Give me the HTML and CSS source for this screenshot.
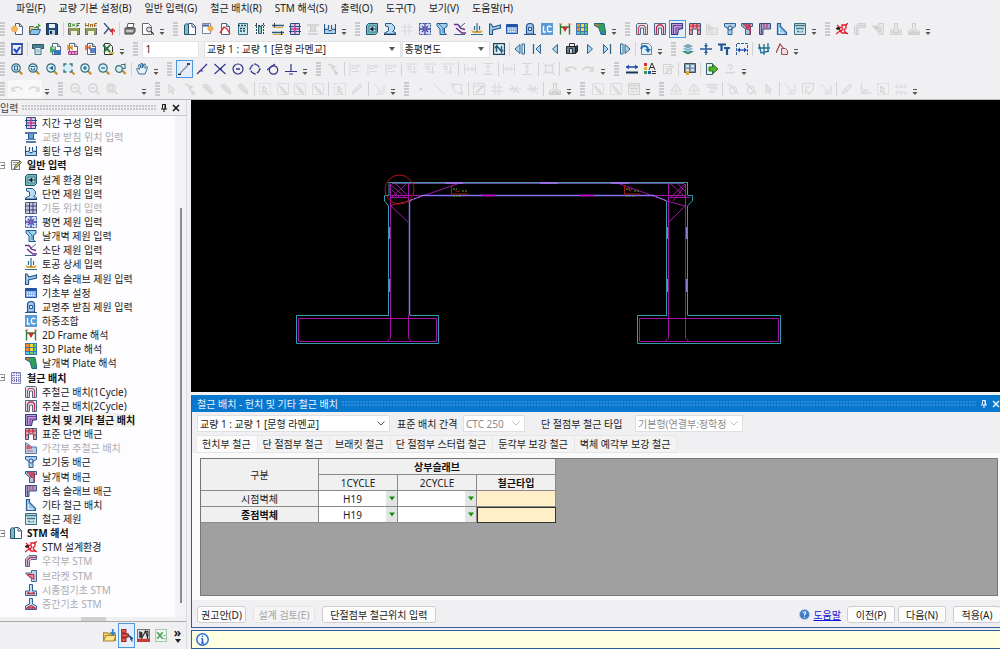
FILE: index.html
```html
<!DOCTYPE html>
<html lang="ko">
<head>
<meta charset="utf-8">
<title>철근 배치</title>
<link rel="stylesheet" href="styles.css">
</head>
<body>
<svg class="defs" aria-hidden="true">
<defs>
<g id="mag"><path d="M8 8l3.3 3.3" stroke="#c98a2c" stroke-width="2.2"/><circle cx="5" cy="5" r="4.2" fill="#d5f1f5" stroke="#37717e" stroke-width="1.2"/></g>
<g id="page"><path d="M2.5 .5h5l3 3v8h-8z" fill="#fff" stroke="#4b6480"/><path d="M7.5 .5v3h3" fill="#cfe0ee" stroke="#4b6480"/></g>
<g id="disk"><path d="M.5 3.5h11v8h-11z" fill="#8f9c52" stroke="#666"/><path d="M3 8h6v4H3z" fill="#eee"/><path d="M0 0h12v5H0z" fill="#e9eef0"/></g>
</defs>
<symbol id="new" viewBox="0 0 12 12"><path d="M4.5 .5h4l3 3v8h-7z" fill="#fff" stroke="#4b6480"/><path d="M8.5 .5v3h3" fill="none" stroke="#4b6480"/><circle cx="3.5" cy="6" r="3" fill="#f4b95c" stroke="#dc9640" stroke-dasharray="1 1"/></symbol>
<symbol id="open" viewBox="0 0 12 12"><path d="M.5 3.5h4l1 1h4v6h-9z" fill="#e6cf7c" stroke="#3d6a8b"/><path d="M2.5 6.5h9l-2 5h-9z" fill="#8ec3e6" stroke="#2b5e8c"/><path d="M7 5V3h2V0l3 3-3 1" fill="#3fa73a"/></symbol>
<symbol id="save" viewBox="0 0 12 12"><path d="M.5 .5h10l1 1v10H.5z" fill="#1f4d78" stroke="#14304e"/><path d="M3 1h6v4H3z" fill="#e6eef5"/><path d="M3 7h6v5H3z" fill="#bcd"/><path d="M4 8h2v3H4z" fill="#14304e"/></symbol>
<symbol id="dxf" viewBox="0 0 12 12"><use href="#disk"/><path d="M.5 .5v3h2v-3zM4 .5l3 3m0-3l-3 3M9 4V.5h3M9 2.5h2" fill="none" stroke="#3f7a24"/></symbol>
<symbol id="wmf" viewBox="0 0 12 12"><use href="#disk"/><path d="M.5 0v3.5L2 2l1.5 1.5V0M5.5 4V1l1 1 1-1v3M9.5 4V.5H12M9.5 2.5h2" fill="none" stroke="#a36a26"/></symbol>
<symbol id="pick" viewBox="0 0 12 12"><path d="M1 0l8 9M1 11l5-6" stroke="#31507a" stroke-width="1.3"/><path d="M9.5 12V7M7 8.5L9.5 6 12 8.5" fill="none" stroke="#d03434" stroke-width="1.3"/></symbol>
<symbol id="print" viewBox="0 0 12 12"><path d="M4 .5h6l-1 4H3z" fill="#fff" stroke="#555"/><path d="M1 5h10v4l-2 2H1z" fill="#888" stroke="#444"/><path d="M2 8h7" stroke="#fff"/></symbol>
<symbol id="preview" viewBox="0 0 12 12"><path d="M.5 .5h6l3 3v8h-9z" fill="#fff" stroke="#666"/><circle cx="7" cy="6.5" r="2.5" fill="#d5dfe4" stroke="#555"/><path d="M9 8.5l3 3" stroke="#444" stroke-width="1.5"/></symbol>
<symbol id="colpage" viewBox="0 0 12 12"><path d="M4.5 .5h4l3 3v8h-7z" fill="#fff" stroke="#35557c"/><path d="M.5 2l2-1.5L4.5 2v9.5h-4z" fill="#7fb9c8" stroke="#24536c"/><path d="M8 1v3h3" fill="none" stroke="#35557c"/></symbol>
<symbol id="sunpage" viewBox="0 0 12 12"><path d="M.5 .5h8v10h-8z" fill="#f7f9fc" stroke="#7a85a0"/><path d="M1 2.5h6" stroke="#3e5f9c" stroke-width="2"/><circle cx="8.5" cy="5.5" r="2.6" fill="#f3b34f" stroke="#d88a2a" stroke-dasharray="1 1"/></symbol>
<symbol id="curvepage" viewBox="0 0 12 12"><use href="#page"/><path d="M1 10l4-6 3 2 3 5" fill="none" stroke="#d4303c" stroke-width="1.4"/></symbol>
<symbol id="calc" viewBox="0 0 12 12"><path d="M1.5 .5h9v11h-9z" fill="#c9e8ec" stroke="#2e7482"/><path d="M1 2.5h5M7 2.5h3M3 5.5h6M3 8h6" stroke="#1b4560" stroke-width="1.5" stroke-dasharray="2 1"/></symbol>
<symbol id="pier" viewBox="0 0 12 12"><path d="M1 2.5h10M2.5 0v12M9.5 0v12" stroke="#345" stroke-dasharray="2 1"/><path d="M4.5 3.5h3v7h-3z" fill="#8fd09a" stroke="#245d8c"/></symbol>
<symbol id="spans" viewBox="0 0 12 12"><path d="M0 2.5h12M0 9.5h12" stroke="#2b5878" stroke-width="1.5"/><path d="M1 4.5h10M1 11.5h10" stroke="#d8a63e"/><path d="M2.5 0v4M9.5 8v4" stroke="#333"/></symbol>
<symbol id="span" viewBox="0 0 12 12"><path d="M1.5 .5h9v11h-9z" fill="#d8cfe6" stroke="#274f86"/><path d="M0 3.5h12M0 8.5h12" stroke="#274f86"/><path d="M2 6h8M6 1v10" stroke="#c03a9a" stroke-width="1.4"/></symbol>
<symbol id="bearing" viewBox="0 0 12 12"><path d="M0 2h12M1 11h10" stroke="#1f4f8c" stroke-width="1.4"/><path d="M3.5 3v5h5V3" fill="#5da7dd" stroke="#1f4f8c"/><path d="M1 8.5h10" stroke="#5b83b8"/></symbol>
<symbol id="cross" viewBox="0 0 12 12"><path d="M.5 1v9.5h11V1M4.5 2v4M7.5 2v4" fill="none" stroke="#27588c" stroke-width="1.2"/><path d="M1 7h10v3H1z" fill="#a9d4ea"/><path d="M0 7l3-1 3 2 3-2 3 1" fill="none" stroke="#1b3f74"/></symbol>
<symbol id="memo" viewBox="0 0 12 12"><path d="M1.5 1.5h8v9h-8z" fill="#f2f4f6" stroke="#777"/><path d="M3 3.5h5M3 5.5h3" stroke="#999"/><path d="M4 10l1-3 5-5 1.5 1.5-5 5z" fill="#b9b95e" stroke="#555" stroke-width=".8"/></symbol>
<symbol id="env" viewBox="0 0 12 12"><path d="M.5 2.5l2-2h9v9l-2 2h-9z" fill="#75bcc0" stroke="#22526c"/><path d="M3 3h7v6H3z" fill="#b9e5dc" stroke="#3f7c8c"/><path d="M4 6l3-2v4zM7 6h3" fill="#10243c" stroke="#10243c" stroke-width=".8"/></symbol>
<symbol id="section" viewBox="0 0 12 12"><path d="M1.5 .5h6l3 3v3l-2 2 3 1v1.500h-11v-1l4-2V4l-3-1z" fill="#b9ddf1" stroke="#27588c"/><path d="M0 11.5h12" stroke="#16365f"/></symbol>
<symbol id="pillar" viewBox="0 0 12 12"><path d="M.5 .5h11v11H.5z" fill="#c5cbdc" stroke="#55607c"/><path d="M4.5 0v12M8 0v12M0 4h12M0 8h12" stroke="#3d3d78"/></symbol>
<symbol id="plan" viewBox="0 0 12 12"><path d="M.5 .5h11v11H.5z" fill="#d6dcf4" stroke="#2a4d94" stroke-dasharray="2 1"/><path d="M3 3l6 6M9 3L3 9M6 0v12M0 6h12" stroke="#3e4aa6" stroke-width="1.3"/><circle cx="6" cy="6" r="1.8" fill="#8f5db8"/></symbol>
<symbol id="wing" viewBox="0 0 12 12"><path d="M1 .5h10v3L8.500 5v5l2 1.5H4V6L1 3z" fill="#9cd3ea" stroke="#27588c"/><path d="M3 1l4 4v5" fill="none" stroke="#2b7fae"/></symbol>
<symbol id="berm" viewBox="0 0 12 12"><path d="M0 1.5h4l3 4 4 1M2 5l6 5h4" fill="none" stroke="#6d2f8c" stroke-width="1.4"/><path d="M11 0L5 5M0 11.5h11" stroke="#44608a"/></symbol>
<symbol id="earth" viewBox="0 0 12 12"><path d="M0 7l3 1h6l3-1-2 3H2z" fill="#e0a32c"/><path d="M6 0v9M3.500 3v4M8.500 3v4" stroke="#2b6f8c" stroke-width="1.2"/><path d="M0 11.5h12" stroke="#2b6f8c"/></symbol>
<symbol id="slab" viewBox="0 0 12 12"><path d="M.5 1v10.5h3V7l8-2V2L4 4 2 1z" fill="#a4d2ee" stroke="#24568c" stroke-width="1.2"/></symbol>
<symbol id="found" viewBox="0 0 12 12"><path d="M.5 1.5h11v9H.5z" fill="#8fb6ea" stroke="#2553a4"/><path d="M1 3h10" stroke="#2553a4" stroke-width="2"/><path d="M2 6h8M2 8.5h8" stroke="#fff" stroke-dasharray="1 1"/></symbol>
<symbol id="plate" viewBox="0 0 12 12"><path d="M2.5 11V4a3.500 3.500 0 0 1 7 0v7z" fill="#9fc8ee" stroke="#27558f" stroke-width="1.2"/><path d="M4.5 4.5h3v3h-3z" fill="#e2eefa" stroke="#27558f"/><path d="M0 11.5h12" stroke="#27558f"/></symbol>
<symbol id="lc" viewBox="0 0 12 12"><path d="M0 0h12v12H0z" fill="#5a9bd6"/><path d="M2.5 3v6H5M10.5 4C7 2 6 4 6.500 7c.5 2.500 3 2 4 1" fill="none" stroke="#fff" stroke-width="1.4"/></symbol>
<symbol id="frame2d" viewBox="0 0 12 12"><path d="M1.5 1v10.5M10.5 1v10.5M1 4h10" fill="none" stroke="#2c7c3a" stroke-width="1.4"/><path d="M3 4h6L6 9z" fill="#d02c2c"/><path d="M0 1h3M9 1h3" stroke="#d8862c"/></symbol>
<symbol id="plate3d" viewBox="0 0 12 12"><path d="M0 0h12v12H0z" fill="#3b78b4"/><path d="M1 1h3v3H1zM1 5h3v3H1z" fill="#f0862e"/><path d="M5 1h3v3H5zM5 5h3v3H5z" fill="#f0dc3a"/><path d="M9 1h2v3H9zM9 5h2v3H9zM5 9h3v2H5z" fill="#6bd04b"/><path d="M1 9h3v2H1zM9 9h2v2H9z" fill="#59c5e6"/></symbol>
<symbol id="wingplate" viewBox="0 0 12 12"><path d="M0 .5h10l2 11H7L5 5 0 2z" fill="#2ea05a" stroke="#1f6a78"/><path d="M0 1h4l2 3" fill="#e4703a"/><path d="M8 7l3 4H8z" fill="#3b78c8"/></symbol>
<symbol id="rebar" viewBox="0 0 12 12"><path d="M1.5 .5h9v11h-9z" fill="#f2f2fb" stroke="#7b87b0"/><path d="M2 3.5h8M2 6h8M2 8.5h8M4 1v10M6.5 1v10M9 1v10" stroke="#6d62ae" stroke-dasharray="1 1"/></symbol>
<symbol id="main1" viewBox="0 0 12 12"><path d="M.5 11.5V1.500l1-1h9l1 1v10h-4V5h-3v6.5z" fill="#dfe9f4" stroke="#4f6888"/><path d="M2.5 11V4.500l1.500-2h4l1.500 2V11" fill="none" stroke="#cc4356" stroke-width="1.2"/></symbol>
<symbol id="main2" viewBox="0 0 12 12"><path d="M.5 11.5V.5h11v11h-4V5h-3v6.5z" fill="#dfe9f4" stroke="#4f6888"/><path d="M2.5 11V4l2-2h3l2 2v7" fill="none" stroke="#c02c48" stroke-width="1.3"/></symbol>
<symbol id="haunch" viewBox="0 0 12 12"><path d="M.5 .5h11v5l-4 1-1 5h-6z" fill="#b8a8e0" stroke="#37407c" stroke-width="1.2"/><path d="M2.5 11V2.5H11M5 11V5h6" fill="none" stroke="#8a2f94" stroke-width="1.1"/></symbol>
<symbol id="std" viewBox="0 0 12 12"><path d="M.5 .5h11v11h-3V6h-5v5.5h-3z" fill="#ef9aa2" stroke="#3e5378"/><path d="M1 3h10M4 1v4M8 1v4M1 7h2M9 7h2" stroke="#b8283c" stroke-width="1.2"/></symbol>
<symbol id="corner" viewBox="0 0 12 12"><path d="M.5 .5v11h11V5H7z" fill="#b9d4ea" stroke="#5577a0"/><path d="M2 3l5 3-5 1zM2 9h6" fill="#d65a68" stroke="#d65a68"/></symbol>
<symbol id="post" viewBox="0 0 12 12"><path d="M.5 .5h11v3L8 5.5v6H4v-6L.5 3.5z" fill="#a9d0ea" stroke="#31609a"/><circle cx="6" cy="5" r="2" fill="#e6f2fa" stroke="#1f4c8c"/></symbol>
<symbol id="wingbar" viewBox="0 0 12 12"><path d="M.5 .5h11v3h-2v8h-5V6L.5 3z" fill="#a7c8e2" stroke="#3a5c88"/><path d="M2 2h7v2H5l1 2h3v5" fill="none" stroke="#c62846" stroke-width="1.4"/></symbol>
<symbol id="slabbar" viewBox="0 0 12 12"><path d="M.5 .5h11V6H4v5.5H.5z" fill="#a7a2d0" stroke="#3d4a78"/><path d="M2.5 1v10M5 1v4M8 1v4" stroke="#b0305c"/></symbol>
<symbol id="etcbar" viewBox="0 0 12 12"><path d="M1.5 .5h3v3l6 6v2h-9z" fill="#8fc6ee" stroke="#2e5f98" stroke-width="1.2"/><path d="M3.5 5v5H8" fill="none" stroke="#e9f5fd"/></symbol>
<symbol id="spec" viewBox="0 0 12 12"><path d="M.5 .5h11v11H.5z" fill="#cfe5ea" stroke="#3d6c80"/><path d="M1 2.5h10M2 5.5h8M3 8.5h6" stroke="#3d7c90" stroke-width="1.5"/><path d="M5 8h3" stroke="#fff"/></symbol>
<symbol id="stm" viewBox="0 0 12 12"><path d="M3 4.500h3V2h4v3L8 7l2 3H6L4 8z" fill="none" stroke="#e0202c" stroke-width="1.300"/><path d="M1 2l3 3M9 3l3-3M0 11l5-4M9 9l3 2M7 5l-2 4" stroke="#e0202c" stroke-width="1.300"/><path d="M0 5.500h4M2 4v3" stroke="#222" stroke-width="1.500"/></symbol>
<symbol id="ugak" viewBox="0 0 12 12"><path d="M.5 11.5V4l3.5-3.5h7.5v4H6L4.5 6v5.5z" fill="#cfdcf0" stroke="#4b6796"/><path d="M2.5 11V5l2.5-2.5h6" fill="none" stroke="#d03448" stroke-width="1.4"/></symbol>
<symbol id="bracket" viewBox="0 0 12 12"><path d="M.5 3h6V.5h5v11h-5V9z" fill="#bcd4ea" stroke="#4b6796"/><path d="M2 4.5h7v5L2 4.5" fill="#ea8a94" stroke="#c82c40"/></symbol>
<symbol id="foot1" viewBox="0 0 12 12"><path d="M4.5 .5h3V7h4v4.5H.5V7h4z" fill="#bfe0f4" stroke="#2f5f96"/><path d="M2 9.5h8M3 8l2 2M9 8l-2 2" stroke="#cc2c3c" stroke-width="1.4"/></symbol>
<symbol id="foot2" viewBox="0 0 12 12"><path d="M4.5 .5h3V6l4 2v3.500H.5V8l4-2z" fill="#bfe0f4" stroke="#2f5f96"/><path d="M2 10l4-2.500L10 10z" fill="none" stroke="#cc2c3c" stroke-width="1.3"/></symbol>
<symbol id="check" viewBox="0 0 12 12"><path d="M1 .5h10v11H1z" fill="#eaf0fb" stroke="#1f3568" stroke-width="1.4"/><path d="M0 1h12" stroke="#2753a8" stroke-width="2"/><path d="M3 6l2.500 3L9 4" fill="none" stroke="#1f48d0" stroke-width="2"/></symbol>
<symbol id="printer" viewBox="0 0 12 12"><path d="M.5 1.5h11v4H.5z" fill="#4a8694" stroke="#30535e"/><path d="M3 4.5h6v7H3z" fill="#d9eef5" stroke="#48707c"/><path d="M4 7h4M4 9h4" stroke="#7fb0c0"/></symbol>
<symbol id="docexp" viewBox="0 0 12 12"><use href="#page"/><path d="M0 3.5h6v6H0z" fill="#48a85c"/><path d="M4 7h7v4H4z" fill="#3f73c0"/><path d="M2 5h3" stroke="#fff"/></symbol>
<symbol id="docxls" viewBox="0 0 12 12"><use href="#page"/><path d="M1 2v4l2-2 2 2V2" fill="none" stroke="#d88a2c" stroke-width="1.5"/><path d="M1 8h10v3.500H1z" fill="#c03490"/><path d="M2 10h8" stroke="#fff" stroke-dasharray="2 1"/></symbol>
<symbol id="docw" viewBox="0 0 12 12"><use href="#page"/><path d="M1 2v4l2-2 2 2V2" fill="none" stroke="#d8622c" stroke-width="1.5"/><path d="M5 5h5v5H5z" fill="#597ec4"/></symbol>
<symbol id="docx" viewBox="0 0 12 12"><path d="M2.500 .5h5l3 3v8h-8z" fill="#eef2ea" stroke="#333"/><path d="M1 2l7 7M8 2L2 9" stroke="#23744a" stroke-width="1.800"/><path d="M7 10h5" stroke="#d8b52c" stroke-width="2"/></symbol>
<symbol id="swap" viewBox="0 0 12 12"><path d="M.5 .5h11v11H.5z" fill="#e2f2f6" stroke="#1f4058" stroke-width="1.3"/><path d="M3.5 9V3L2 5M8.5 3v6L10 7M4 3l4 5" fill="none" stroke="#22587c" stroke-width="1.5"/></symbol>
<symbol id="first" viewBox="0 0 12 12"><path d="M6 1.5v9L1 6z" fill="#a5d8f4" stroke="#2f648c"/><path d="M8 1h2.500v10H8z" fill="#d9eff9" stroke="#2f648c"/></symbol>
<symbol id="prevbar" viewBox="0 0 12 12"><path d="M9.5 1.5v9L5 6z" fill="#a5d8f4" stroke="#2f648c"/><path d="M2.5 1v10" stroke="#2f648c" stroke-width="1.3"/></symbol>
<symbol id="prev" viewBox="0 0 12 12"><path d="M8.5 1.5v9L3.5 6z" fill="#a5d8f4" stroke="#2f648c"/></symbol>
<symbol id="next" viewBox="0 0 12 12"><path d="M3.5 1.5v9L8.5 6z" fill="#a5d8f4" stroke="#2f648c"/></symbol>
<symbol id="nextbar" viewBox="0 0 12 12"><path d="M2.5 1.5v9L7 6z" fill="#a5d8f4" stroke="#2f648c"/><path d="M9.5 1v10" stroke="#2f648c" stroke-width="1.3"/></symbol>
<symbol id="last" viewBox="0 0 12 12"><path d="M6 1.5v9L11 6z" fill="#a5d8f4" stroke="#2f648c"/><path d="M1.5 1H4v10H1.5z" fill="#d9eff9" stroke="#2f648c"/></symbol>
<symbol id="model" viewBox="0 0 12 12"><path d="M3.500 .5h5v3h-5z" fill="#e6eef2" stroke="#333"/><path d="M.5 3.500h9v7h-9z" fill="#6b7c8c" stroke="#222"/><path d="M9.500 3.500l2-1v6l-2 2z" fill="#34414e" stroke="#222"/><path d="M3.500 5.500h3v5h-3z" fill="#b4dcea" stroke="#333"/></symbol>
<symbol id="refresh" viewBox="0 0 12 12"><path d="M1.500 .5h7l3 3v8h-10z" fill="#e4f0f8" stroke="#6b8398"/><path d="M1 6c1-4 6-4 7 0" fill="none" stroke="#2272b8" stroke-width="2"/><path d="M5 6h6L8 10z" fill="#2272b8"/></symbol>
<symbol id="layers" viewBox="0 0 12 12"><path d="M0 8.500l6-2 6 2-6 3z" fill="#3c8f7c"/><path d="M0 5.5l6-2 6 2-6 3z" fill="#6ab4d8" stroke="#fff" stroke-width=".6"/><path d="M0 3l6-2.500L12 3 6 6z" fill="#7fa4b8" stroke="#fff" stroke-width=".6"/></symbol>
<symbol id="cline" viewBox="0 0 12 12"><path d="M0 6h12M6 0v12" stroke="#2a5ca0" stroke-width="1.3"/><path d="M4 2h4L6 5zM4 10h4L6 7z" fill="#2a5ca0"/></symbol>
<symbol id="tt" viewBox="0 0 12 12"><path d="M0 1.5h8M3.5 1v7M6 5h6M9 5v7" fill="none" stroke="#1f5590" stroke-width="2.200"/></symbol>
<symbol id="dim" viewBox="0 0 12 12"><path d="M.5 12V.5h11V12" fill="none" stroke="#2d5f98" stroke-dasharray="3 1"/><path d="M2 7h8" stroke="#1f4cb0" stroke-width="1.3"/><path d="M1 7l3-2.500v5zM11 7L8 4.500v5z" fill="#1f4cb0"/></symbol>
<symbol id="axis" viewBox="0 0 12 12"><path d="M1 1l2 9 8-2M0 5h12M6 1v11M10 0v9" fill="none" stroke="#1f6f94" stroke-width="1.3"/></symbol>
<symbol id="curvedoc" viewBox="0 0 12 12"><path d="M0 10L4 1l4 5" fill="none" stroke="#a04048" stroke-width="1.2"/><path d="M5.5 5.5h4l2 2v4h-6z" fill="#f4d8d8" stroke="#94545c"/></symbol>
<symbol id="zfit" viewBox="0 0 12 12"><use href="#mag"/><path d="M3.5 3h3v4h-3z" fill="none" stroke="#215c9c"/></symbol>
<symbol id="zwin" viewBox="0 0 12 12"><use href="#mag"/><path d="M2.5 3.5h5M3.5 5v2h3V5" fill="none" stroke="#215c9c"/></symbol>
<symbol id="zprev" viewBox="0 0 12 12"><use href="#mag"/><path d="M7 3v4L3 5z" fill="#215c9c"/></symbol>
<symbol id="zall" viewBox="0 0 12 12"><circle cx="5" cy="5" r="4" fill="#d5f1f5"/><path d="M1 3.5V1h2.500M6.5 1H9v2.500M9 6.5V9H6.5M3.5 9H1V6.5" fill="none" stroke="#37717e" stroke-width="1.4"/><path d="M9 9l2.500 2.500" stroke="#c98a2c" stroke-width="2"/></symbol>
<symbol id="zin" viewBox="0 0 12 12"><use href="#mag"/><path d="M3 5h4M5 3v4" stroke="#215c9c" stroke-width="1.2"/></symbol>
<symbol id="zout" viewBox="0 0 12 12"><use href="#mag"/><path d="M3 5h4" stroke="#215c9c" stroke-width="1.2"/></symbol>
<symbol id="zdyn" viewBox="0 0 12 12"><path d="M7 7l3.500 4" stroke="#c98a2c" stroke-width="2"/><circle cx="4" cy="6" r="3.3" fill="#d5f1f5" stroke="#37717e" stroke-width="1.2"/><path d="M6 1.500h4M10 .5v5H8" fill="none" stroke="#37717e" stroke-width="1.2"/></symbol>
<symbol id="hand" viewBox="0 0 12 12"><path d="M3 11L.5 6l1-1 2 1.500L2.500 2l1.200-.5L5 5V.5h1.500V5L8 1h1.200L9 5.500 11 3.500l.5 1L9 11z" fill="#e8f6fc" stroke="#2f6f9c"/></symbol>
<symbol id="line" viewBox="0 0 12 12"><path d="M2 10.5L10 2" stroke="#8a86a8" stroke-width="1.2"/><path d="M0 11.500h3M9 1h3" stroke="#111" stroke-width="1.5"/></symbol>
<symbol id="mline" viewBox="0 0 12 12"><path d="M1 11L11 1M3 8h4" stroke="#34348c" stroke-width="1.2"/></symbol>
<symbol id="xline" viewBox="0 0 12 12"><path d="M.5 1l11 10M.5 11l11-10M5 6h3" stroke="#34348c" stroke-width="1.1"/></symbol>
<symbol id="circ" viewBox="0 0 12 12"><circle cx="6" cy="6" r="5" fill="none" stroke="#34348c" stroke-width="1.2"/><path d="M4 6h4" stroke="#34348c" stroke-width="1.5"/></symbol>
<symbol id="quad" viewBox="0 0 12 12"><circle cx="6" cy="6" r="4.500" fill="none" stroke="#34348c" stroke-width="1.2" stroke-dasharray="5 2"/><path d="M6 0v2M6 10v2M0 6h2M10 6h2" stroke="#34348c"/></symbol>
<symbol id="tang" viewBox="0 0 12 12"><circle cx="6.5" cy="7" r="4.2" fill="none" stroke="#34348c" stroke-width="1.2"/><path d="M0 7l8-6" stroke="#34348c" stroke-width="1.2"/></symbol>
<symbol id="perp" viewBox="0 0 12 12"><path d="M0 8.500h12M6 1v8M4 11h4" stroke="#34348c" stroke-width="1.2"/></symbol>
<symbol id="widths" viewBox="0 0 12 12"><path d="M0 4h12" stroke="#1f48b0" stroke-width="1.5"/><path d="M0 4l3-2.500v5zM12 4L9 1.500v5z" fill="#1f48b0"/><path d="M0 9.500h12" stroke="#16365f" stroke-width="2"/></symbol>
<symbol id="colors" viewBox="0 0 12 12"><path d="M0 0h3v3H0z" fill="#d03030"/><path d="M0 4h3v3H0z" fill="#e3b22c"/><path d="M0 8h3v3H0z" fill="#2f9a48"/><path d="M4 8h3v3H4z" fill="#2f55b8"/><path d="M5 7l3-7 3 7M6 4.5h4M8 8.5h4M8 10.5h4" fill="none" stroke="#333"/></symbol>
<symbol id="view" viewBox="0 0 12 12"><path d="M.5 .5h11v9H.5z" fill="#7d93a6" stroke="#3b4f60"/><path d="M2 2h3v2.500H2zM7 2h3v2.500H7zM2 6h3v2H2zM7 6h3v2H7z" fill="#d4e6f2"/><path d="M5 2h1v6H5z" fill="#3da050"/><path d="M2 8h3v4H2z" fill="#e0a832"/></symbol>
<symbol id="exit" viewBox="0 0 12 12"><path d="M.5 .5h6v11h-6z" fill="#e9f2e4" stroke="#2d6070"/><path d="M3 4h4V1.500L12 6l-5 4.500V8H3z" fill="#4fb52c" stroke="#2a7420"/></symbol>
<symbol id="ask" viewBox="0 0 12 12"><path d="M1 9.500h10M4 4c0-3 5-3 4 0L6 6v1" fill="none" stroke="#888" stroke-width="1.4"/></symbol>
<symbol id="arrow" viewBox="0 0 12 12"><path d="M3 1v9l2-2 2 3 1-1-2-3h3z" fill="#bbb" stroke="#777"/></symbol>
<symbol id="arrow2" viewBox="0 0 12 12"><path d="M1 1l7 3-3 1 6 6M8 7v4h3" fill="none" stroke="#777" stroke-width="1.6"/></symbol>
<symbol id="arrow3" viewBox="0 0 12 12"><path d="M1 2l4-1 5 6 1 4-3-1-6-5zM3 3l6 7" fill="#aaa" stroke="#777"/></symbol>
<symbol id="boxsel" viewBox="0 0 12 12"><path d="M.5 .5h11v11H.5z" fill="none" stroke="#888" stroke-dasharray="2 1"/><path d="M4 3v6l2-1 2 3M4 3l4 4" fill="none" stroke="#777" stroke-width="1.4"/></symbol>
<symbol id="boxarr" viewBox="0 0 12 12"><path d="M.5 .5h11v11H.5z" fill="none" stroke="#999"/><path d="M2 2l6 5 2 4-4-2z" fill="#aaa" stroke="#777"/></symbol>
<symbol id="alh" viewBox="0 0 12 12"><path d="M1 0v12M3 2.5h4v3H3zM3 8.5h7M9 1v4M8 3h4" fill="none" stroke="#888"/></symbol>
<symbol id="alv" viewBox="0 0 12 12"><path d="M0 1h12M2 3.5h3v3H2zM8.5 3v8M3 9h8" fill="none" stroke="#888"/></symbol>
<symbol id="gaph" viewBox="0 0 12 12"><path d="M.5 1v10M11.5 1v10M1 6h10M4 4v4M8 4v4" stroke="#888"/></symbol>
<symbol id="gapv" viewBox="0 0 12 12"><path d="M1 .5h10M1 11.5h10M6 1v10M4 4h4M4 8h4" stroke="#888"/></symbol>
<symbol id="frame" viewBox="0 0 12 12"><path d="M2.5 2.5h7v7h-7zM0 0l2 2M12 0l-2 2M0 12l2-2M12 12l-2-2" fill="none" stroke="#888" stroke-width="1.3"/></symbol>
<symbol id="undo" viewBox="0 0 12 12"><path d="M1 4v4h4M1 8c2-5 8-5 10-1" fill="none" stroke="#777" stroke-width="1.6"/></symbol>
<symbol id="redo" viewBox="0 0 12 12"><path d="M11 4v4H7M11 8C9 3 3 3 1 7" fill="none" stroke="#777" stroke-width="1.6"/></symbol>
<symbol id="edit" viewBox="0 0 12 12"><path d="M.5 .5h11v11H.5zM.5 3h11" fill="none" stroke="#888"/><path d="M3 10L10 3" stroke="#777" stroke-width="2"/></symbol>
<symbol id="diag" viewBox="0 0 12 12"><path d="M1 1l10 10" stroke="#888"/></symbol>
<symbol id="dot" viewBox="0 0 12 12"><circle cx="6" cy="6" r="1.5" fill="#777"/></symbol>
<symbol id="poly" viewBox="0 0 12 12"><path d="M1.5 1.5h9v9l-7-2zM0 0h3v3H0zM9 9h3v3H9z" fill="none" stroke="#888"/></symbol>
<symbol id="hash" viewBox="0 0 12 12"><path d="M0 4h12M0 8h12M4 0v12M8 0v12" stroke="#888"/></symbol>
<symbol id="star" viewBox="0 0 12 12"><path d="M0 6h12M2 2l8 8M4 10l5-7M2 8l3-4" stroke="#888" stroke-width="1.2"/></symbol>
<symbol id="tri" viewBox="0 0 12 12"><path d="M0 11h12M6 1L1 8h10zM6 4v6" fill="none" stroke="#888" stroke-width="1.2"/></symbol>
<symbol id="load" viewBox="0 0 12 12"><path d="M0 1.5h12M1 4h10M6 4v5M3 9h6M8 6h4" stroke="#888" stroke-width="1.3"/></symbol>
<symbol id="loop" viewBox="0 0 12 12"><circle cx="6" cy="7" r="3.5" fill="none" stroke="#888" stroke-width="1.3"/><path d="M1 0l10 11" stroke="#888" stroke-width="1.3"/></symbol>
<symbol id="corn" viewBox="0 0 12 12"><path d="M.5 11V.5h11V7M4 11V4h4M5 8l2 3 5-5" fill="none" stroke="#888" stroke-width="1.2"/></symbol>
<symbol id="bev" viewBox="0 0 12 12"><path d="M1 1l8 8M3 11h8V2M5 7l2 3 3-4" fill="none" stroke="#888"/></symbol>
<symbol id="pen" viewBox="0 0 12 12"><path d="M1 11l1-3 7-7 2 2-7 7zM4 6l2 2" fill="#ccc" stroke="#888"/></symbol>
<symbol id="ell" viewBox="0 0 12 12"><path d="M2.5 0v10H12M5 11V7h4" fill="none" stroke="#888" stroke-width="1.3"/></symbol>
<symbol id="rail" viewBox="0 0 12 12"><path d="M0 4h12M0 9h12M2 1v4M6 1v4M10 1v4M2 9v3M6 9v3M10 9v3" stroke="#888"/></symbol>
<symbol id="dd" viewBox="0 0 6 8"><path d="M1 1.5h4" stroke="#555"/><path d="M.5 4h5L3 7z" fill="#555"/></symbol>
<symbol id="tri-down" viewBox="0 0 6 4"><path d="M0 0h6L3 4z" fill="currentColor"/></symbol>
<symbol id="chev" viewBox="0 0 8 5"><path d="M.5 .5L4 4 7.5 .5" fill="none" stroke="currentColor"/></symbol>
<symbol id="pin" viewBox="0 0 8 8"><path d="M2.5 4.5v-4h3v4M1 5h6M4 5v3M5 1v4" fill="none" stroke="currentColor"/></symbol>
<symbol id="x" viewBox="0 0 8 8"><path d="M1 1l6 6M7 1L1 7" stroke="currentColor" stroke-width="1.5"/></symbol>
<symbol id="redlist" viewBox="0 0 12 12"><path d="M1.5 .5h4v3h-4zM1.5 4.5h6v3h-6zM1.5 8.5h4v3h-4z" fill="#e05a48" stroke="#a02c24"/><path d="M7 5l5 4-2 .5 1.500 2" fill="#23407c" stroke="#23407c"/></symbol>
<symbol id="pic" viewBox="0 0 12 12"><path d="M.5 .5h11v11H.5z" fill="#e4e4e4" stroke="#777"/><path d="M2 2l3 1v5H2z" fill="#333"/><path d="M0 9h12v3H0z" fill="#c83a3a"/><path d="M4 9l4-7 2 7M7 2h3v5" fill="none" stroke="#222"/></symbol>
<symbol id="xls" viewBox="0 0 12 12"><path d="M1.5 .5h10v11h-10z" fill="#f1f8f1" stroke="#a5c8ac"/><path d="M3 3l5 6M8 3L3 9" stroke="#49a05c" stroke-width="1.5"/><path d="M8 6h3M8 9h3" stroke="#8cc498"/></symbol>
<symbol id="folder" viewBox="0 0 12 12"><path d="M.5 3.5h4l1 1h6v6H.5z" fill="#f3d364" stroke="#a9822c"/><path d="M2.5 6h9.500l-2 5H.5z" fill="#fae48c" stroke="#a9822c"/><path d="M9 0v4M7 3l2 2 2-2" fill="none" stroke="#2f7cc8" stroke-width="1.5"/></symbol>
</svg>

<header class="top">
<nav class="menu">
<button>파일(F)</button><button>교량 기본 설정(B)</button><button>일반 입력(G)</button><button>철근 배치(R)</button><button>STM 해석(S)</button><button>출력(O)</button><button>도구(T)</button><button>보기(V)</button><button>도움말(H)</button>
</nav>
<div class="row">
<div class="bar w-file"><i class="grip"></i><button><svg><use href="#new"/></svg></button><button><svg><use href="#open"/></svg></button><button><svg><use href="#save"/></svg></button><i class="sep"></i><button><svg><use href="#dxf"/></svg></button><button><svg><use href="#wmf"/></svg></button><button><svg><use href="#pick"/></svg></button><i class="sep"></i><button><svg><use href="#print"/></svg></button><button><svg><use href="#preview"/></svg></button><button class="more"><svg><use href="#dd"/></svg></button></div>
<div class="bar w-basic"><i class="grip"></i><button><svg><use href="#colpage"/></svg></button><button><svg><use href="#sunpage"/></svg></button><button><svg><use href="#curvepage"/></svg></button><button><svg><use href="#calc"/></svg></button><button><svg><use href="#pier"/></svg></button><button><svg><use href="#spans"/></svg></button><button><svg><use href="#span"/></svg></button><button disabled><svg><use href="#bearing"/></svg></button><button><svg><use href="#cross"/></svg></button><button class="more"><svg><use href="#dd"/></svg></button></div>
<div class="bar w-input"><i class="grip"></i><button><svg><use href="#env"/></svg></button><button><svg><use href="#section"/></svg></button><button disabled><svg><use href="#hash"/></svg></button><button><svg><use href="#plan"/></svg></button><button><svg><use href="#wing"/></svg></button><button><svg><use href="#berm"/></svg></button><button><svg><use href="#earth"/></svg></button><button><svg><use href="#slab"/></svg></button><button><svg><use href="#found"/></svg></button><button><svg><use href="#plate"/></svg></button><button><svg><use href="#lc"/></svg></button><button><svg><use href="#frame2d"/></svg></button><button><svg><use href="#plate3d"/></svg></button><button><svg><use href="#wingplate"/></svg></button><button class="more"><svg><use href="#dd"/></svg></button></div>
<div class="bar w-rebar"><i class="grip"></i><button><svg><use href="#main1"/></svg></button><button><svg><use href="#main2"/></svg></button><button class="on"><svg><use href="#haunch"/></svg></button><button><svg><use href="#std"/></svg></button><button disabled><svg><use href="#corner"/></svg></button><button><svg><use href="#post"/></svg></button><button><svg><use href="#wingbar"/></svg></button><button><svg><use href="#slabbar"/></svg></button><button><svg><use href="#etcbar"/></svg></button><button><svg><use href="#spec"/></svg></button><button class="more"><svg><use href="#dd"/></svg></button></div>
<div class="bar w-stm"><i class="grip"></i><button><svg><use href="#stm"/></svg></button><button disabled><svg><use href="#ugak"/></svg></button><button disabled><svg><use href="#bracket"/></svg></button><button disabled><svg><use href="#foot1"/></svg></button><button disabled><svg><use href="#foot2"/></svg></button><button class="more"><svg><use href="#dd"/></svg></button></div>
</div>
<div class="row">
<div class="bar w-out"><i class="grip"></i><button><svg><use href="#check"/></svg></button><i class="sep"></i><button><svg><use href="#printer"/></svg></button><button><svg><use href="#docexp"/></svg></button><button><svg><use href="#docxls"/></svg></button><button><svg><use href="#docw"/></svg></button><button><svg><use href="#docx"/></svg></button><button class="more"><svg><use href="#dd"/></svg></button></div>
<div class="bar w-nav"><i class="grip"></i><input class="num" value="1" aria-label="번호">
<span class="combo flat bridge"><select aria-label="교량"><option>교량 1 : 교량 1 [문형 라멘교]</option></select><svg class="tri"><use href="#tri-down"/></svg></span><span class="combo flat drawing"><select aria-label="도면"><option>종평면도</option></select><svg class="tri"><use href="#tri-down"/></svg></span>
<button><svg><use href="#swap"/></svg></button><i class="sep"></i><button><svg><use href="#first"/></svg></button><button><svg><use href="#prevbar"/></svg></button><button><svg><use href="#prev"/></svg></button><button><svg><use href="#model"/></svg></button><button><svg><use href="#next"/></svg></button><button><svg><use href="#nextbar"/></svg></button><button><svg><use href="#last"/></svg></button><i class="sep"></i><button><svg><use href="#refresh"/></svg></button><button class="more"><svg><use href="#dd"/></svg></button></div>
<div class="bar w-layer"><i class="grip"></i><button><svg><use href="#layers"/></svg></button><button><svg><use href="#cline"/></svg></button><button><svg><use href="#tt"/></svg></button><button><svg><use href="#dim"/></svg></button><i class="sep"></i><button><svg><use href="#axis"/></svg></button><button><svg><use href="#curvedoc"/></svg></button><button class="more"><svg><use href="#dd"/></svg></button></div>
</div>
<div class="row">
<div class="bar w-zoom"><i class="grip"></i><button><svg><use href="#zfit"/></svg></button><button><svg><use href="#zwin"/></svg></button><button><svg><use href="#zprev"/></svg></button><button><svg><use href="#zall"/></svg></button><button><svg><use href="#zin"/></svg></button><button><svg><use href="#zout"/></svg></button><button><svg><use href="#zdyn"/></svg></button><i class="sep"></i><button><svg><use href="#hand"/></svg></button><button class="more"><svg><use href="#dd"/></svg></button></div>
<div class="bar w-snap"><i class="grip"></i><button class="on"><svg><use href="#line"/></svg></button><button><svg><use href="#mline"/></svg></button><button><svg><use href="#xline"/></svg></button><button><svg><use href="#circ"/></svg></button><button><svg><use href="#quad"/></svg></button><button><svg><use href="#tang"/></svg></button><button><svg><use href="#perp"/></svg></button><button class="more"><svg><use href="#dd"/></svg></button></div>
<div class="bar w-align"><i class="grip"></i><button disabled><svg><use href="#arrow2"/></svg></button><i class="sep"></i><button disabled><svg><use href="#alh"/></svg></button><button disabled><svg><use href="#alh"/></svg></button><button disabled><svg><use href="#alh"/></svg></button><i class="sep"></i><button disabled><svg><use href="#alv"/></svg></button><button disabled><svg><use href="#alv"/></svg></button><button disabled><svg><use href="#alv"/></svg></button><i class="sep"></i><button disabled><svg><use href="#gaph"/></svg></button><button disabled><svg><use href="#gapv"/></svg></button><i class="sep"></i><button disabled><svg><use href="#gaph"/></svg></button><button disabled><svg><use href="#gapv"/></svg></button><i class="sep"></i><button disabled><svg><use href="#frame"/></svg></button><i class="sep"></i><button disabled><svg><use href="#undo"/></svg></button><button disabled><svg><use href="#redo"/></svg></button><button class="more"><svg><use href="#dd"/></svg></button></div>
<div class="bar w-view"><i class="grip"></i><button><svg><use href="#widths"/></svg></button><button><svg><use href="#colors"/></svg></button><button disabled><svg><use href="#memo"/></svg></button><i class="sep"></i><button><svg><use href="#view"/></svg></button><i class="sep"></i><button><svg><use href="#exit"/></svg></button><button disabled><svg><use href="#ask"/></svg></button><button class="more"><svg><use href="#dd"/></svg></button></div>
</div>
<div class="row">
<div class="bar w-undo"><i class="grip"></i><button disabled class="white"><svg><use href="#undo"/></svg></button><button disabled class="white"><svg><use href="#redo"/></svg></button><button class="more"><svg><use href="#dd"/></svg></button></div>
<div class="bar w-find"><i class="grip"></i><button disabled><svg><use href="#zout"/></svg></button><button disabled><svg><use href="#zout"/></svg></button><button disabled><svg><use href="#zfit"/></svg></button><button disabled></button><button class="more"><svg><use href="#dd"/></svg></button></div>
<div class="bar w-select"><i class="grip"></i><button disabled><svg><use href="#arrow"/></svg></button><button disabled><svg><use href="#arrow2"/></svg></button><button disabled><svg><use href="#arrow3"/></svg></button><button disabled><svg><use href="#arrow3"/></svg></button><button disabled><svg><use href="#arrow3"/></svg></button><i class="sep"></i><button disabled><svg><use href="#boxsel"/></svg></button><button disabled><svg><use href="#boxarr"/></svg></button><button disabled><svg><use href="#boxarr"/></svg></button><button disabled><svg><use href="#boxarr"/></svg></button><i class="sep"></i><button disabled><svg><use href="#boxsel"/></svg></button><button disabled><svg><use href="#pen"/></svg></button><i class="sep"></i><button disabled><svg><use href="#bev"/></svg></button><button class="more"><svg><use href="#dd"/></svg></button></div>
<div class="bar w-draw"><i class="grip"></i><button disabled><svg><use href="#dot"/></svg></button><button disabled><svg><use href="#diag"/></svg></button><button disabled><svg><use href="#poly"/></svg></button><i class="sep"></i><button disabled><svg><use href="#edit"/></svg></button><button disabled><svg><use href="#hash"/></svg></button><button disabled><svg><use href="#star"/></svg></button><button disabled><svg><use href="#star"/></svg></button><i class="sep"></i><button disabled><svg><use href="#foot2"/></svg></button><button class="more"><svg><use href="#dd"/></svg></button></div>
<div class="bar w-box"><i class="grip"></i><button disabled><svg><use href="#boxarr"/></svg></button><button disabled><svg><use href="#boxarr"/></svg></button><button disabled><svg><use href="#spec"/></svg></button><button class="more"><svg><use href="#dd"/></svg></button></div>
<div class="bar w-load"><i class="grip"></i><button disabled><svg><use href="#tri"/></svg></button><button disabled><svg><use href="#tri"/></svg></button><button disabled><svg><use href="#load"/></svg></button><i class="sep"></i><button disabled><svg><use href="#loop"/></svg></button><button disabled><svg><use href="#loop"/></svg></button><button disabled><svg><use href="#arrow"/></svg></button><i class="sep"></i><button disabled><svg><use href="#bev"/></svg></button><button disabled><svg><use href="#corn"/></svg></button><button disabled><svg><use href="#bev"/></svg></button><i class="sep"></i><button disabled><svg><use href="#pen"/></svg></button><button disabled><svg><use href="#ell"/></svg></button><button disabled><svg><use href="#boxsel"/></svg></button><button disabled><svg><use href="#rail"/></svg></button><button class="more"><svg><use href="#dd"/></svg></button></div>
</div>
</header>

<main class="work">
<aside class="side">
<div class="side-head"><span>입력</span><i class="dots"></i><button><svg><use href="#pin"/></svg></button><button><svg><use href="#x"/></svg></button></div>
<div class="tree-wrap">
<ul class="tree">
<li><svg><use href="#span"/></svg><span>지간 구성 입력</span></li>
<li class="off"><svg><use href="#bearing"/></svg><span>교량 받침 위치 입력</span></li>
<li><svg><use href="#cross"/></svg><span>횡단 구성 입력</span></li>
<li class="group"><i class="exp"></i><svg><use href="#memo"/></svg><span>일반 입력</span></li>
<li><svg><use href="#env"/></svg><span>설계 환경 입력</span></li>
<li><svg><use href="#section"/></svg><span>단면 제원 입력</span></li>
<li class="off"><svg><use href="#pillar"/></svg><span>기둥 위치 입력</span></li>
<li><svg><use href="#plan"/></svg><span>평면 제원 입력</span></li>
<li><svg><use href="#wing"/></svg><span>날개벽 제원 입력</span></li>
<li><svg><use href="#berm"/></svg><span>소단 제원 입력</span></li>
<li><svg><use href="#earth"/></svg><span>토공 상세 입력</span></li>
<li><svg><use href="#slab"/></svg><span>접속 슬래브 제원 입력</span></li>
<li><svg><use href="#found"/></svg><span>기초부 설정</span></li>
<li><svg><use href="#plate"/></svg><span>교명주 받침 제원 입력</span></li>
<li><svg><use href="#lc"/></svg><span>하중조합</span></li>
<li><svg><use href="#frame2d"/></svg><span>2D Frame 해석</span></li>
<li><svg><use href="#plate3d"/></svg><span>3D Plate 해석</span></li>
<li><svg><use href="#wingplate"/></svg><span>날개벽 Plate 해석</span></li>
<li class="group"><i class="exp"></i><svg><use href="#rebar"/></svg><span>철근 배치</span></li>
<li><svg><use href="#main1"/></svg><span>주철근 배치(1Cycle)</span></li>
<li><svg><use href="#main2"/></svg><span>주철근 배치(2Cycle)</span></li>
<li class="current"><svg><use href="#haunch"/></svg><span>헌치 및 기타 철근 배치</span></li>
<li><svg><use href="#std"/></svg><span>표준 단면 배근</span></li>
<li class="off"><svg><use href="#corner"/></svg><span>가각부 주철근 배치</span></li>
<li><svg><use href="#post"/></svg><span>보기둥 배근</span></li>
<li><svg><use href="#wingbar"/></svg><span>날개벽 배근</span></li>
<li><svg><use href="#slabbar"/></svg><span>접속 슬래브 배근</span></li>
<li><svg><use href="#etcbar"/></svg><span>기타 철근 배치</span></li>
<li><svg><use href="#spec"/></svg><span>철근 제원</span></li>
<li class="group"><i class="exp"></i><svg><use href="#colpage"/></svg><span>STM 해석</span></li>
<li><svg><use href="#stm"/></svg><span>STM 설계환경</span></li>
<li class="off"><svg><use href="#ugak"/></svg><span>우각부 STM</span></li>
<li class="off"><svg><use href="#bracket"/></svg><span>브라켓 STM</span></li>
<li class="off"><svg><use href="#foot1"/></svg><span>시종점기초 STM</span></li>
<li class="off"><svg><use href="#foot2"/></svg><span>중간기초 STM</span></li>
</ul>
<div class="vscroll"><i></i></div>
</div>
<div class="splitter"><i></i></div>
<div class="side-tabs"><button><svg><use href="#folder"/></svg></button><button class="on"><svg><use href="#redlist"/></svg></button><button><svg><use href="#pic"/></svg></button><button><svg><use href="#xls"/></svg></button><button class="ov"><span>»</span><svg class="tri"><use href="#tri-down"/></svg></button></div>
</aside>

<section class="right">
<div class="canvas">
<svg viewBox="191 100 809 292" fill="none">
<g stroke="#a314a6">
<path d="M298.500 318.500h138v23h-138zM639.500 318.500h139v23h-139z"/>
<path d="M390.500 184v154l-4 4M408.500 184v17M408.500 315v23l4 4M668.500 184v154l-4 4M685.500 184v154l4 4"/>
<path d="M391 195.500h45M391 197.500h18M641 195.500h44M668 197.500h22"/>
<path d="M391 206l17 16M685 206l-17 17M408 201l52-18M620 184l47 17 18 5"/>
<path d="M391 185l15 13M406 184l-15 14M396 184l12 12M392 190l8 8M671 184l14 13M685 184l-14 13M673 201l12-15M678 184l8 8"/>
</g>
<g stroke="#2f9fae">
<path d="M389 315.500h-92.500v28h142v-28h-29M667 315.500h-29.500v28h143v-28h-93"/>
<path d="M388.500 315V206l-4-5v-5.500h4.500V182M666.500 315V201M687.500 315V206l5-5v-5.500h-5V182"/>
</g>
<path d="M389 182.500h298" stroke="#4c93a6"/><path d="M392 183.500h292" stroke="#634c9c"/>
<path d="M409.500 315V201M424 195.500h228" stroke="#8670f0" stroke-width="1.500"/>
<path d="M424 195l-15 6M652 195l15 6" stroke="#8ea0ff" stroke-dasharray="3 1"/>
<path d="M445 183h18M540 183h18M611 183h18" stroke="#a870f4" stroke-width="1.500"/>
<path d="M389.500 227v12M389.500 279v13M667.500 227v12M667.500 279v13M686.500 227v12M686.500 279v13" stroke="#8676d0"/>
<path d="M482 195.500h14M580 195.500h14" stroke="#d000c8" stroke-width="1.500"/>
<circle cx="399.500" cy="189.500" r="14.500" stroke="#b01820"/>
<path d="M391 205.500l19-5" stroke="#d01838" stroke-dasharray="4 1"/>
<path d="M451.500 185v9h17M624.500 185v9h16M455 190l3 2 2-2M628 188l2 3 2-2" stroke="#a01c10"/>
<path d="M453 189h4M462 191h5M453 196h4M459 196h3M626 189h4M634 191h5M626 196h4M632 196h3" stroke="#4fae22" stroke-dasharray="2 1"/>
</svg>
</div>

<section class="panel">
<div class="title"><h1>철근 배치 - 헌치 및 기타 철근 배치</h1><i class="dots"></i><button><svg><use href="#pin"/></svg></button><button><svg><use href="#x"/></svg></button></div>
<div class="options">
<span class="combo wide"><select aria-label="교량 선택"><option>교량 1 : 교량 1 [문형 라멘교]</option></select><svg class="chev"><use href="#chev"/></svg></span>
<label for="ctc">표준 배치 간격</label>
<span class="combo ctc"><select id="ctc" disabled><option>CTC 250</option></select><svg class="chev"><use href="#chev"/></svg></span>
<label for="type" class="lead">단 절점부 철근 타입</label>
<span class="combo type"><select id="type" disabled><option>기본형(연결부:정학정)</option></select><svg class="chev"><use href="#chev"/></svg></span>
</div>
<div class="tabs" role="tablist"><button role="tab" class="on">헌치부 철근</button><button role="tab">단 절점부 철근</button><button role="tab">브래킷 철근</button><button role="tab">단 절점부 스터럽 철근</button><button role="tab">둔각부 보강 철근</button><button role="tab">벽체 예각부 보강 철근</button></div>
<div class="pane"><div class="sheet">
<table>
<colgroup><col class="c0"><col class="c1"><col class="c1"><col class="c1"></colgroup>
<tr><th rowspan="2">구분</th><th colspan="3" class="b">상부슬래브</th></tr>
<tr><th>1CYCLE</th><th>2CYCLE</th><th class="b">철근타입</th></tr>
<tr><th>시점벽체</th><td><span class="cell"><select aria-label="시점벽체 1CYCLE"><option>H19</option></select><i><svg><use href="#tri-down"/></svg></i></span></td><td><span class="cell"><select aria-label="시점벽체 2CYCLE"><option></option></select><i><svg><use href="#tri-down"/></svg></i></span></td><td class="y"></td></tr>
<tr><th class="b">종점벽체</th><td><span class="cell"><select aria-label="종점벽체 1CYCLE"><option>H19</option></select><i><svg><use href="#tri-down"/></svg></i></span></td><td><span class="cell"><select aria-label="종점벽체 2CYCLE"><option></option></select><i><svg><use href="#tri-down"/></svg></i></span></td><td class="y focus"></td></tr>
</table>
</div></div>
<div class="actions"><button>권고안(D)</button><button disabled>설계 검토(E)</button><button class="big">단절점부 철근위치 입력</button>
<a href="#help"><svg viewBox="0 0 12 12"><circle cx="6" cy="6" r="5.500" fill="#3c7cc8" stroke="#b5c6da"/><path d="M4.500 4.500c0-2 3-2 3 0L6 6v1M6 8.500v1" fill="none" stroke="#fff" stroke-width="1.200"/></svg><span>도움말</span></a><button>이전(P)</button><button>다음(N)</button><button class="apply">적용(A)</button></div>
</section>
<footer class="status"><svg viewBox="0 0 12 12"><circle cx="6" cy="6" r="5.300" fill="#f2f8ff" stroke="#2a6cc8" stroke-width="1.300"/><path d="M6 2.500v1.300M6 5v4.500M4.800 5.200H6M4.800 9.300h2.400" stroke="#2458b8" stroke-width="1.300"/></svg></footer>
</section>
</main>
</body>
</html>
```
FILE: styles.css
```css
* { box-sizing: border-box; }
body {
  margin: 0;
  height: 100vh;
  display: flex;
  flex-direction: column;
  overflow: hidden;
  background: #f0f0f2;
  color: #222;
  font: 10px/14px "Noto Sans", "Noto Sans CJK KR", sans-serif;
}
button, input, select { font: inherit; color: inherit; margin: 0; }
button { border: 0; padding: 0; background: none; white-space: nowrap; }
svg { display: block; flex: none; }
.defs { width: 0; height: 0; position: absolute; }

/* menu and toolbars */
.top { flex: none; border-bottom: 1px solid #b9b9bb; overflow: hidden; }
.menu { display: flex; gap: 13px; height: 19px; padding: 0 16px 3px; }
.row { display: flex; gap: 6px; height: 20px; }
.bar { display: flex; flex: none; align-items: center; justify-content: space-between; }
.bar button { width: 17px; height: 18px; display: grid; place-items: center; border: 1px solid transparent; }
.bar button svg { width: 12px; height: 12px; }
.bar button:disabled svg { filter: grayscale(1); opacity: .22; }
.bar .white { background: #f8f8f9; }
.bar .on, .side-tabs .on { background: #e3eefa; border: 1px solid #4c96dc; }
.bar .more { width: 10px; align-items: end; padding-bottom: 1px; }
.bar .more svg { width: 6px; height: 8px; }
.grip { width: 5px; margin-right: 3px; height: 14px; background: radial-gradient(circle at 1px 1px, #cacacd 1px, transparent 1px) 0 0 / 2px 3px; }
.sep { width: 1px; margin: 0 1px; height: 14px; background: #d2d2d5; }
.w-file { width: 167px; }
.w-basic { width: 176px; }
.w-input { width: 264px; }
.w-rebar { width: 194px; }
.w-stm { width: 108px; }
.w-out { width: 127px; }
.w-nav { width: 532px; }
.w-layer { width: 130px; }
.w-zoom { width: 161px; }
.w-snap { width: 143px; }
.w-align { width: 292px; }
.w-view { width: 135px; }
.w-undo { width: 52px; }
.w-find { width: 91px; }
.w-select { width: 243px; }
.w-draw { width: 170px; }
.w-box { width: 73px; }
.w-load { width: 261px; }

.num { width: 57px; height: 17px; border: 1px solid #e4e4e6; background: #fff; padding: 0 3px; }
.combo { display: grid; grid-template-columns: 1fr 16px; align-items: center; background: #fff; border: 1px solid #e0e0e2; height: 17px; }
.combo select {
  grid-area: 1 / 1 / 2 / 3;
  appearance: none;
  width: 100%;
  height: 15px;
  border: 0;
  padding: 0 16px 0 2px;
  background: transparent;
  line-height: 14px;
}
.combo svg { grid-area: 1 / 2; justify-self: center; pointer-events: none; color: #555; }
.tri { width: 6px; height: 4px; }
.chev { width: 8px; height: 5px; }
.bridge { width: 197px; margin-left: 5px; }
.drawing { width: 88px; }

/* tree sidebar */
.work { flex: 1; display: flex; gap: 4px; min-height: 0; }
.side { width: 187px; flex: none; display: flex; flex-direction: column; border-right: 1px solid #dcdce0; }
.side-head { display: flex; align-items: center; gap: 4px; height: 16px; padding: 0 6px 0 0; border-bottom: 1px solid #c8c8cc; }
.side-head span { color: #444; }
.side-head button svg, .title button svg { width: 8px; height: 8px; }
.side-head button { color: #111; }
.dots { flex: 1; height: 6px; background: radial-gradient(circle at 1px 1px, #c6c6ca 1px, transparent 1px) 0 0 / 3px 3px; }
.tree-wrap { flex: 1; display: flex; min-height: 0; background: #fdfcff; }
.tree { flex: 1; min-width: 0; list-style: none; margin: 0; padding: 0 0 6px; display: flex; flex-direction: column; }
.tree li { flex: 1; display: flex; align-items: center; gap: 5px; padding-left: 25px; white-space: nowrap; }
.tree li svg { width: 12px; height: 12px; }
.tree .off { color: #acacb0; }
.tree .group { padding-left: 0; font-weight: bold; color: #111; }
.exp { width: 5px; height: 7px; border: 1px solid #999; border-left: 0; background: linear-gradient(#666, #666) center / 3px 1px no-repeat; }
.tree .current { font-weight: bold; color: #111; }
.current span { background: #f1f1ee; }
.vscroll { width: 11px; background: #f3f3f5; padding: 92px 4px 14px 5px; display: flex; }
.vscroll i { flex: 1; background: #8c8c8e; }
.splitter { height: 5px; display: flex; justify-content: center; border-bottom: 1px solid #aaa; }
.splitter i { width: 25px; background: #cfcfd1; }
.side-tabs { height: 27px; display: flex; align-items: center; justify-content: flex-end; }
.side-tabs button { width: 17px; height: 25px; display: grid; place-items: center; border: 1px solid transparent; }
.side-tabs svg { width: 13px; height: 13px; }
.side-tabs .ov { align-content: center; line-height: 8px; font-weight: bold; font-size: 12px; gap: 2px; }
.side-tabs .tri { width: 6px; height: 4px; }

/* drawing area */
.right { flex: 1; min-width: 0; display: flex; flex-direction: column; }
.canvas { flex: 1; min-height: 0; background: #000; }
.canvas svg { width: 100%; height: 100%; }

/* docked panel */
.panel { margin-top: 3px; border: 1px solid #2f5aa0; border-width: 0 0 1px 1px; }
.title { height: 17px; display: flex; align-items: center; gap: 4px; padding: 0 0 0 5px; background: #0878cf; color: #e8f4ff; }
.title h1 { margin: 0; font-size: 10px; font-weight: normal; }
.title .dots { background-image: radial-gradient(circle at 1px 1px, #2a8ad8 1px, transparent 1px); }
.options { display: flex; align-items: center; height: 23px; padding: 0 5px; gap: 4px; }
.options label { width: 65px; padding-left: 3px; white-space: nowrap; }
.options .lead { width: 94px; margin-left: 8px; padding-left: 4px; }
.options .combo select:disabled { color: #8b8b8e; opacity: 1; }
.wide { width: 193px; }
.ctc { width: 62px; }
.type { width: 108px; }
.ctc svg, .type svg { color: #bbb; }
.tabs { display: flex; height: 18px; padding-left: 5px; }
.tabs button { padding: 0 6px 0 5px; border: 1px solid #e6e6e8; border-left: 0; background: #f3f3f4; }
.tabs .on { background: #fbfbfc; }
.pane { background: #fafafb; padding: 5px 2px 4px 8px; }
.sheet { height: 138px; background: #a0a0a0; border: 1px solid #777; overflow: hidden; }
table { border-collapse: collapse; table-layout: fixed; width: 355px; margin: -1px 0 0 -1px; }
.c0 { width: 118px; }
.c1 { width: 79px; }
tr { height: 16px; }
th, td { padding: 0; border: 1px solid #8a8a8a; font-weight: normal; text-align: center; background: #f0f0f0; height: 16px; }
td { background: #fff; }
.b { font-weight: bold; color: #111; }
.y { background: #ffefc8; }
.focus { outline: 1px solid #333; outline-offset: -1px; }
.cell { display: grid; grid-template-columns: 1fr 11px; height: 15px; }
.cell select { appearance: none; border: 0; padding: 0; background: transparent; text-align-last: center; width: 100%; line-height: 14px; }
.cell i { background: #e2e6e2; display: grid; place-items: center; color: #129012; }
.cell i svg { width: 6px; height: 5px; }
.actions { display: flex; align-items: center; gap: 3px; height: 27px; padding: 2px 0 0 5px; }
.actions button { height: 17px; min-width: 48px; padding: 0 3px; border: 1px solid #cdcdd0; border-radius: 3px; background: #fdfdfd; }
.actions button:disabled { min-width: 62px; margin: 0 4px 0 4px; color: #a4a4a8; background: #f4f4f5; border-color: #e4e4e6; }
.actions .big { min-width: 114px; }
.actions .apply { margin: 0 -1px 0 4px; }
.actions a { margin-left: auto; margin-right: 3px; display: flex; align-items: center; gap: 3px; color: #1414e0; }
.actions a svg { width: 11px; height: 11px; }
.status { flex: none; height: 19px; margin-top: 2px; border: 1px solid #2f5aa0; border-right: 0; background: #ffffe1; display: flex; align-items: center; padding-left: 4px; }
.status svg { width: 13px; height: 13px; }
```
